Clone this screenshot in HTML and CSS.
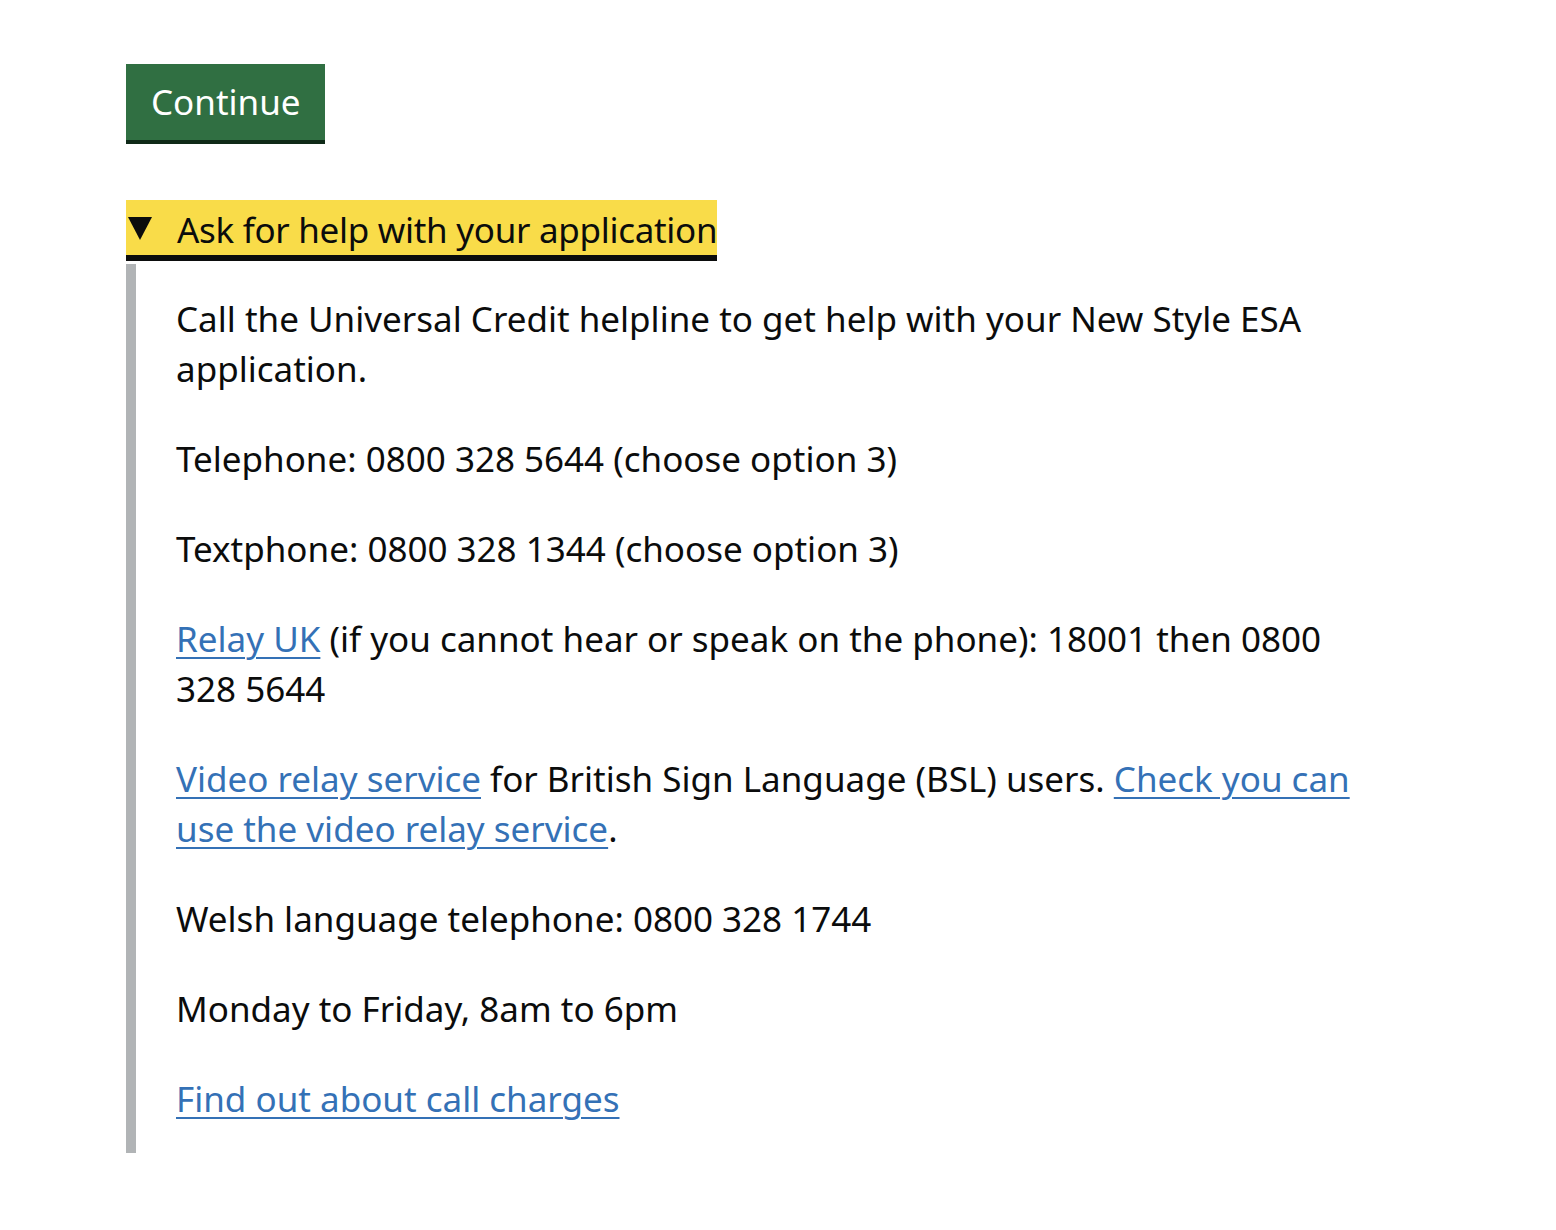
FILE: index.html
```html
<!DOCTYPE html>
<html lang="en">
<head>
<meta charset="utf-8">
<title>Ask for help with your application</title>
<link rel="stylesheet" href="styles.css">
</head>
<body>
<main class="main">
  <button class="button" type="button">Continue</button>
  <details class="details" open>
    <summary class="details-summary"><span class="details-summary-text">Ask for help with your application</span></summary>
    <div class="details-text">
      <p class="body">Call the Universal Credit helpline to get help with your New Style ESA application.</p>
      <p class="body">Telephone: 0800 328 5644 (choose option 3)</p>
      <p class="body">Textphone: 0800 328 1344 (choose option 3)</p>
      <p class="body"><a class="link" href="#">Relay UK</a> (if you cannot hear or speak on the phone): 18001 then 0800 328 5644</p>
      <p class="body"><a class="link" href="#">Video relay service</a> for British Sign Language (BSL) users. <a class="link" href="#">Check you can use the video relay service</a>.</p>
      <p class="body">Welsh language telephone: 0800 328 1744</p>
      <p class="body">Monday to Friday, 8am to 6pm</p>
      <p class="body last"><a class="link" href="#">Find out about call charges</a></p>
    </div>
  </details>
</main>
</body>
</html>
```

FILE: styles.css
```css
html, body {
  margin: 0;
  padding: 0;
  background: #ffffff;
}

body {
  font-family: "Noto Sans", "Liberation Sans", Arial, sans-serif;
  color: #0b0c0c;
  font-size: 35px;
  line-height: 50px;
}

.main {
  padding: 64px 126px 60px 126px;
}

.button {
  display: block;
  box-sizing: border-box;
  height: 76px;
  margin: 0 0 60px 0;
  padding: 0 24px 2px 25px;
  border: 0;
  background: #306f42;
  color: #ffffff;
  font-family: inherit;
  font-size: 35px;
  line-height: 1;
  box-shadow: 0 4px 0 #0f2a18;
  cursor: pointer;
}

.details {
  display: block;
  width: 1244px;
}

.details-summary {
  display: inline-block;
  list-style: none;
  position: relative;
  padding: 5px 0 0 51px;
  background: #f9dc49;
  box-shadow: 0 6px 0 #0b0c0c;
  line-height: 50px;
  letter-spacing: -0.3px;
  cursor: pointer;
}

.details-summary::-webkit-details-marker {
  display: none;
}

.details-summary::before {
  content: "";
  position: absolute;
  left: 2px;
  top: 17px;
  width: 0;
  height: 0;
  border-style: solid;
  border-width: 23px 12px 0 12px;
  border-color: #0b0c0c transparent transparent transparent;
}

.details-text {
  margin-top: 9px;
  padding: 30px 0 29px 40px;
  border-left: 10px solid #b1b4b6;
}

.body {
  margin: 0 0 40px 0;
}

.body.last {
  margin-bottom: 0;
}

.link {
  color: #3471b6;
  text-decoration: underline;
  text-decoration-thickness: 2px;
  text-underline-offset: 5px;
}
```
